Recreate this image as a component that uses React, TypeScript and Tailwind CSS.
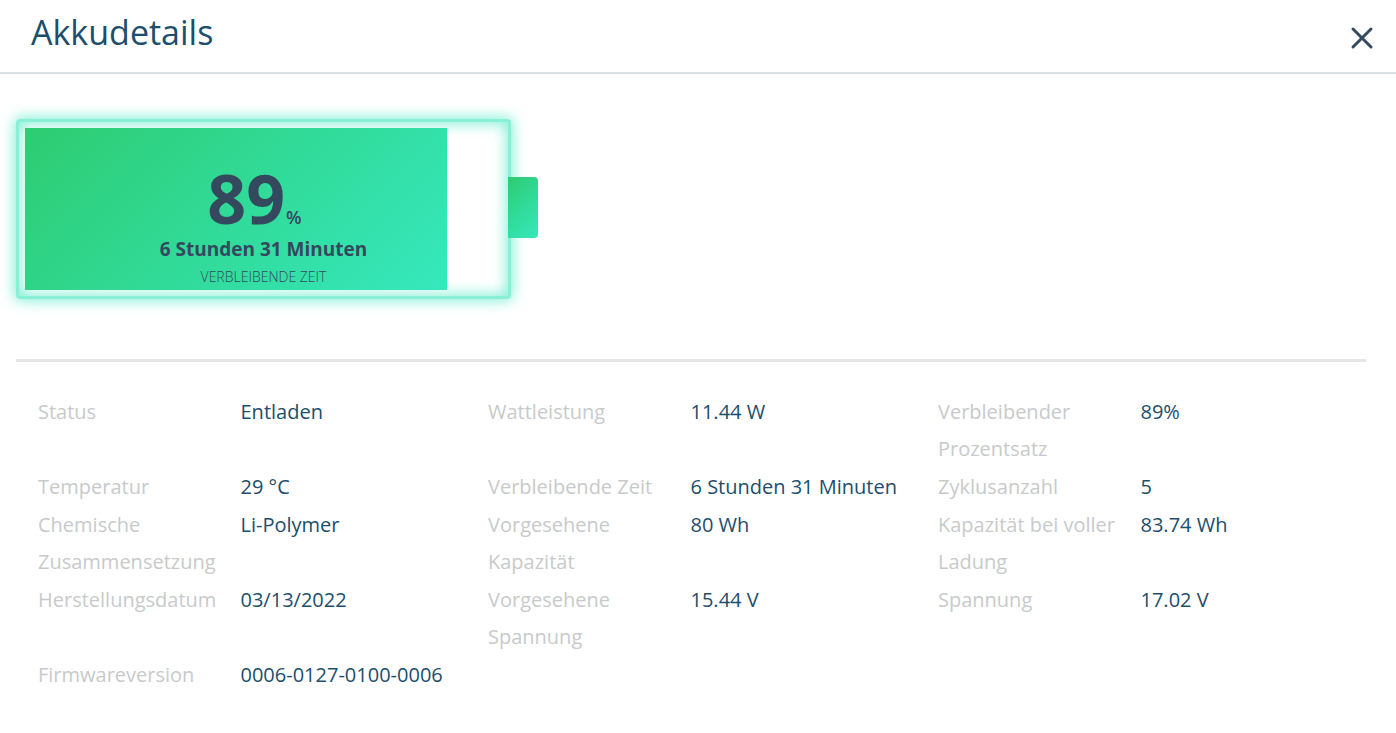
import { X } from "lucide-react";

type Detail = { label: string; value: string };

const DETAILS: Detail[] = [
  { label: "Status", value: "Entladen" },
  { label: "Wattleistung", value: "11.44 W" },
  { label: "Verbleibender Prozentsatz", value: "89%" },
  { label: "Temperatur", value: "29 °C" },
  { label: "Verbleibende Zeit", value: "6 Stunden 31 Minuten" },
  { label: "Zyklusanzahl", value: "5" },
  { label: "Chemische Zusammensetzung", value: "Li-Polymer" },
  { label: "Vorgesehene Kapazität", value: "80 Wh" },
  { label: "Kapazität bei voller Ladung", value: "83.74 Wh" },
  { label: "Herstellungsdatum", value: "03/13/2022" },
  { label: "Vorgesehene Spannung", value: "15.44 V" },
  { label: "Spannung", value: "17.02 V" },
  { label: "Firmwareversion", value: "0006-0127-0100-0006" },
];

const Header = () => (
  <header className="flex items-center justify-between border-b-2 border-[#dce1e5] pt-1 pr-4 pl-[31px]">
    <h1 className="pb-3 text-[34px] leading-[56px] text-[#1d4e6b]">
      Akkudetails
    </h1>
    <button type="button" aria-label="Schließen" className="text-[#34495e]">
      <X className="size-9" strokeWidth={2} />
    </button>
  </header>
);

const Battery = ({ percent, time }: { percent: number; time: string }) => (
  <div className="flex items-center">
    <div className="relative h-[180px] w-[495px] rounded-[4px] border-3 border-[#87f0d6] p-[6px] shadow-[0_0_14px_2px_#87f0d6,inset_0_0_14px_2px_#87f0d6]">
      <div
        className="h-full bg-linear-135 from-[#2ecc71] to-[#36e8bd]"
        style={{ width: `${percent * 0.994}%` }}
      />
      <div className="absolute inset-0 flex flex-col items-center pt-10 text-[#34495e]">
        <div className="flex items-baseline gap-px pr-[18px] font-bold">
          <span className="text-[68px] leading-[72px]">{percent}</span>
          <span className="text-[18px] leading-6 font-semibold">%</span>
        </div>
        <div className="pt-px text-[19px] leading-7 font-bold">{time}</div>
        <div className="text-[14px] leading-7 font-light uppercase">
          Verbleibende Zeit
        </div>
      </div>
    </div>
    <div className="relative mb-[3px] -ml-[3px] h-[61px] w-[30px] rounded-r-[4px] bg-linear-135 from-[#2ecc71] to-[#36e8bd]" />
  </div>
);

const App = () => {
  return (
    <div className="min-h-screen bg-white font-['Open_Sans','Noto_Sans',sans-serif]">
      <Header />
      <main className="pt-[45px] pr-[30px] pl-4">
        <Battery percent={89} time="6 Stunden 31 Minuten" />
        <hr className="mt-[60px] border-t-3 border-[#e5e5e5]" />
        <dl className="mt-[31px] grid grid-cols-3 gap-y-px text-[20px] leading-[37px]">
          {DETAILS.map(({ label, value }) => (
            <div key={label} className="grid grid-cols-[9fr_11fr]">
              <dt className="pl-[22px] text-[#c8caca]">{label}</dt>
              <dd className="pl-[22px] text-[#1d4e6b]">{value}</dd>
            </div>
          ))}
        </dl>
      </main>
    </div>
  );
};

export default App;
